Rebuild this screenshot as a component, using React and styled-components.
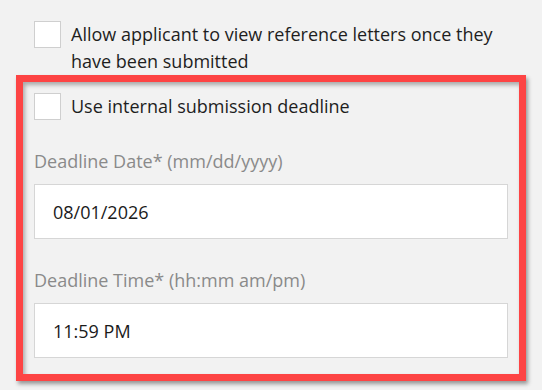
import React from "react";
import styled, { createGlobalStyle } from "styled-components";

const Global = createGlobalStyle`
  html, body { margin: 0; padding: 0; background: #f2f2f2; }
  body { font-family: "Open Sans", "Noto Sans", sans-serif; }
`;

const Page = styled.div`
  width: 542px;
  height: 390px;
  box-sizing: border-box;
  padding: 21px 16px 0 16px;
  background: #f2f2f2;
  display: flex;
  flex-direction: column;
`;

const CheckRow = styled.label`
  display: flex;
  align-items: flex-start;
  gap: 10px;
  padding-left: ${(p) => p.$indent || 0}px;
  font-size: 18px;
  line-height: 27px;
  color: #1e1e1e;
`;

const Box = styled.span`
  flex: none;
  width: 27px;
  height: 27px;
  box-sizing: border-box;
  background: #ffffff;
  border: 1px solid #cfcfcf;
`;

const CheckText = styled.span`
  flex: 1;
`;

const Highlight = styled.section`
  border: 7px solid #fd4444;
  padding: 11px 11px 16px 11px;
  display: flex;
  flex-direction: column;
  box-shadow: 2px 3px 4px rgba(0, 0, 0, 0.38), inset 2px 3px 4px rgba(0, 0, 0, 0.3);
`;

const Field = styled.div`
  display: flex;
  flex-direction: column;
  gap: 9px;
  margin-top: 28px;
`;

const Label = styled.div`
  font-size: 18px;
  line-height: 27px;
  color: #8a8a8a;
`;

const Input = styled.div`
  height: 55px;
  box-sizing: border-box;
  background: #ffffff;
  border: 1px solid #d6d6d6;
  padding: 0 18px;
  display: flex;
  align-items: center;
  font-size: 18px;
  color: #1a1a1a;
`;

export default function App() {
  return (
    <>
      <Global />
      <Page>
        <CheckRow $indent={18}>
          <Box />
          <CheckText>Allow applicant to view reference letters once they have been submitted</CheckText>
        </CheckRow>
        <Highlight>
          <CheckRow>
            <Box />
            <CheckText>Use internal submission deadline</CheckText>
          </CheckRow>
          <Field>
            <Label>Deadline Date* (mm/dd/yyyy)</Label>
            <Input>08/01/2026</Input>
          </Field>
          <Field>
            <Label>Deadline Time* (hh:mm am/pm)</Label>
            <Input>11:59 PM</Input>
          </Field>
        </Highlight>
      </Page>
    </>
  );
}
